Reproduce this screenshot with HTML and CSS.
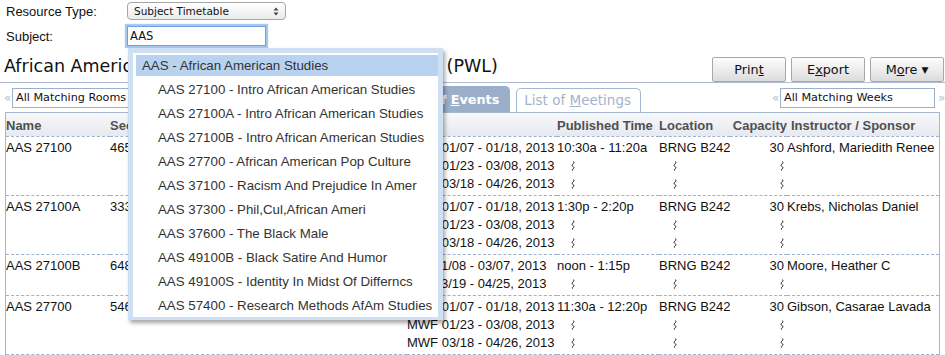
FILE: index.html
```html
<!DOCTYPE html>
<html lang="en">

<head>
  <meta charset="UTF-8">
  <title>Subject Timetable</title>
  <link rel="stylesheet" href="styles.css">
</head>

<body>
  <svg width="0" height="0" class="defs">
    <symbol id="ditto" viewBox="0 0 4 10">
      <path d="M2 0.5C3.4 1.4 3.4 2.1 2 3C0.6 3.9 0.6 4.6 2 5.5C3.4 6.4 3.4 7.1 2 8C0.8 8.8 1 9.2 2 9.6" />
    </symbol>
  </svg>

  <div class="page">
    <div class="search">
      <div class="field">
        <label>Resource Type:</label>
        <div class="select-type">Subject Timetable
          <svg class="updown" width="6" height="9" viewBox="0 0 6 9">
            <path d="M3 0.5L5.5 3.5H0.5Z M3 8.5L5.5 5.5H0.5Z" />
          </svg>
        </div>
      </div>
      <div class="field field-subject">
        <label>Subject:</label>
        <div class="input-subject">AAS</div>
      </div>
    </div>

    <div class="title-bar">
      <h1>African American Studies Timetable - Spring 2013 (PWL)</h1>
      <div class="buttons">
        <a class="btn" href="javascript:void(0)">Prin<u>t</u></a>
        <a class="btn" href="javascript:void(0)">E<u>x</u>port</a>
        <a class="btn" href="javascript:void(0)">M<u>o</u>re <span class="caret">▼</span></a>
      </div>
    </div>

    <div class="toolbar">
      <div class="pager">
        <span class="arrow">«</span>
        <div class="pager-box pager-rooms">All Matching Rooms</div>
      </div>
      <div class="spacer"></div>
      <div class="tabs">
        <a class="tab tab-active" href="javascript:void(0)">List of <u>E</u>vents</a>
        <a class="tab" href="javascript:void(0)">List of <u>M</u>eetings</a>
      </div>
      <div class="pager">
        <span class="arrow">«</span>
        <div class="pager-box pager-weeks">All Matching Weeks</div>
        <span class="arrow arrow-next">»</span>
      </div>
    </div>

    <div class="grid-box">
      <table class="grid">
        <colgroup>
          <col style="width:104px">
          <col style="width:60px">
          <col style="width:60px">
          <col style="width:177px">
          <col style="width:150px">
          <col style="width:102px">
          <col style="width:71px">
          <col style="width:57px">
          <col style="width:152px">
        </colgroup>
        <thead>
          <tr>
            <th>Name</th>
            <th>Section</th>
            <th>Type</th>
            <th>Title</th>
            <th>Date</th>
            <th>Published Time</th>
            <th>Location</th>
            <th class="cap">Capacity</th>
            <th class="instr">Instructor / Sponsor</th>
          </tr>
        </thead>
        <tbody>
          <tr>
            <td>AAS 27100</td>
            <td>46587</td>
            <td>Lec</td>
            <td>Intro African Amer Stds</td>
            <td>
              <div>MWF 01/07 - 01/18, 2013</div>
              <div>MWF 01/23 - 03/08, 2013</div>
              <div>MWF 03/18 - 04/26, 2013</div>
            </td>
            <td>
              <div>10:30a - 11:20a</div>
              <div class="same"><svg class="ditto"><use href="#ditto" /></svg></div>
              <div class="same"><svg class="ditto"><use href="#ditto" /></svg></div>
            </td>
            <td>
              <div>BRNG B242</div>
              <div class="same"><svg class="ditto"><use href="#ditto" /></svg></div>
              <div class="same"><svg class="ditto"><use href="#ditto" /></svg></div>
            </td>
            <td class="cap">
              <div>30</div>
              <div><svg class="ditto"><use href="#ditto" /></svg></div>
              <div><svg class="ditto"><use href="#ditto" /></svg></div>
            </td>
            <td>Ashford, Mariedith Renee</td>
          </tr>
          <tr>
            <td>AAS 27100A</td>
            <td>33317</td>
            <td>Lec</td>
            <td>Intro African Amer Stds</td>
            <td>
              <div>MWF 01/07 - 01/18, 2013</div>
              <div>MWF 01/23 - 03/08, 2013</div>
              <div>MWF 03/18 - 04/26, 2013</div>
            </td>
            <td>
              <div>1:30p - 2:20p</div>
              <div class="same"><svg class="ditto"><use href="#ditto" /></svg></div>
              <div class="same"><svg class="ditto"><use href="#ditto" /></svg></div>
            </td>
            <td>
              <div>BRNG B242</div>
              <div class="same"><svg class="ditto"><use href="#ditto" /></svg></div>
              <div class="same"><svg class="ditto"><use href="#ditto" /></svg></div>
            </td>
            <td class="cap">
              <div>30</div>
              <div><svg class="ditto"><use href="#ditto" /></svg></div>
              <div><svg class="ditto"><use href="#ditto" /></svg></div>
            </td>
            <td>Krebs, Nicholas Daniel</td>
          </tr>
          <tr>
            <td>AAS 27100B</td>
            <td>64857</td>
            <td>Lec</td>
            <td>Intro African Amer Stds</td>
            <td>
              <div>MW 01/08 - 03/07, 2013</div>
              <div>MW 03/19 - 04/25, 2013</div>
            </td>
            <td>
              <div>noon - 1:15p</div>
              <div class="same"><svg class="ditto"><use href="#ditto" /></svg></div>
            </td>
            <td>
              <div>BRNG B242</div>
              <div class="same"><svg class="ditto"><use href="#ditto" /></svg></div>
            </td>
            <td class="cap">
              <div>30</div>
              <div><svg class="ditto"><use href="#ditto" /></svg></div>
            </td>
            <td>Moore, Heather C</td>
          </tr>
          <tr>
            <td>AAS 27700</td>
            <td>54686</td>
            <td>Lec</td>
            <td>African Amer Pop Culture</td>
            <td>
              <div>MWF 01/07 - 01/18, 2013</div>
              <div>MWF 01/23 - 03/08, 2013</div>
              <div>MWF 03/18 - 04/26, 2013</div>
            </td>
            <td>
              <div>11:30a - 12:20p</div>
              <div class="same"><svg class="ditto"><use href="#ditto" /></svg></div>
              <div class="same"><svg class="ditto"><use href="#ditto" /></svg></div>
            </td>
            <td>
              <div>BRNG B242</div>
              <div class="same"><svg class="ditto"><use href="#ditto" /></svg></div>
              <div class="same"><svg class="ditto"><use href="#ditto" /></svg></div>
            </td>
            <td class="cap">
              <div>30</div>
              <div><svg class="ditto"><use href="#ditto" /></svg></div>
              <div><svg class="ditto"><use href="#ditto" /></svg></div>
            </td>
            <td>Gibson, Casarae Lavada</td>
          </tr>
        </tbody>
      </table>
    </div>

    <ul class="suggest">
      <li class="hl">AAS - African American Studies</li>
      <li>AAS 27100 - Intro African American Studies</li>
      <li>AAS 27100A - Intro African American Studies</li>
      <li>AAS 27100B - Intro African American Studies</li>
      <li>AAS 27700 - African American Pop Culture</li>
      <li>AAS 37100 - Racism And Prejudice In Amer</li>
      <li>AAS 37300 - Phil,Cul,African Ameri</li>
      <li>AAS 37600 - The Black Male</li>
      <li>AAS 49100B - Black Satire And Humor</li>
      <li>AAS 49100S - Identity In Midst Of Differncs</li>
      <li>AAS 57400 - Research Methods AfAm Studies</li>
    </ul>
  </div>
</body>

</html>
```

FILE: styles.css
```css
html,
body,
h1,
ul,
li {
  margin: 0;
  padding: 0;
}

html,
body {
  overflow: hidden;
  background: #fff;
}

body {
  font: 13px "Liberation Sans", Arial, sans-serif;
  color: #111;
}

a {
  color: inherit;
  text-decoration: none;
}

.defs {
  position: absolute;
}

.page {
  position: relative;
}

/* search form */
.search {
  padding: 2px 0 0 6px;
}

.field {
  display: flex;
  align-items: center;
}

.field label {
  width: 121px;
}

.field-subject {
  margin-top: 6px;
}

.select-type {
  display: flex;
  justify-content: space-between;
  align-items: center;
  box-sizing: border-box;
  width: 159px;
  height: 18px;
  padding: 0 6px 0 6px;
  border: 1px solid #a6a6a6;
  border-radius: 4px;
  background: linear-gradient(#fff, #ebebeb);
  font: 10.5px/16px "DejaVu Sans", sans-serif;
}

.updown {
  fill: #444;
}

.input-subject {
  box-sizing: border-box;
  width: 139px;
  height: 20px;
  padding-left: 2px;
  border: 1px solid #6f9fdc;
  box-shadow: 0 0 1px 2px #a8c8ee;
  font: 11.5px/18px "DejaVu Sans", sans-serif;
}

/* heading and buttons */
.title-bar {
  display: flex;
  justify-content: space-between;
  height: 25px;
  margin-top: 11px;
  border-bottom: 1px solid #aebbd0;
}

.title-bar h1 {
  padding-left: 4px;
  font: normal 17.5px/19px "DejaVu Sans", sans-serif;
  white-space: nowrap;
}

.buttons {
  display: flex;
  gap: 5px;
  padding-right: 1px;
}

.btn {
  box-sizing: border-box;
  width: 74px;
  height: 25px;
  border: 1px solid #a9a9a9;
  border-radius: 2px;
  background: linear-gradient(#fdfdfd, #dcdcdc);
  font: 12.8px/23px "DejaVu Sans", sans-serif;
  text-align: center;
}

.caret {
  font-size: 9px;
  vertical-align: 1px;
}

/* pagers and tabs */
.toolbar {
  display: flex;
  align-items: flex-start;
  height: 29px;
  padding: 0 0 0 4px;
}

.pager {
  display: flex;
  flex-shrink: 0;
  align-items: center;
  margin-top: 5px;
}

.arrow {
  flex-shrink: 0;
  width: 8px;
  color: #b8bfca;
  font: 12px/18px "DejaVu Sans", sans-serif;
}

.arrow-next {
  width: 7px;
  margin-left: 3px;
}

.pager-box {
  flex-shrink: 0;
  box-sizing: border-box;
  height: 20px;
  padding-left: 3px;
  border: 1px solid #9db0cb;
  font: 11.2px/18px "DejaVu Sans", sans-serif;
  white-space: nowrap;
}

.pager-rooms {
  width: 160px;
}

.pager-weeks {
  width: 155px;
}

.spacer {
  flex: 1;
}

.tabs {
  display: flex;
  align-items: flex-end;
  gap: 6px;
  align-self: flex-end;
  margin-right: 131px;
}

.tab {
  box-sizing: border-box;
  height: 24px;
  padding: 0 9px 0 7px;
  border: 1px solid #a5b8d3;
  border-bottom: 0;
  border-radius: 5px 5px 0 0;
  color: #a3b3cb;
  font: 13.5px/23px "DejaVu Sans", sans-serif;
  white-space: nowrap;
}

.tab-active {
  height: 26px;
  padding: 0 10px 0 9px;
  border-color: #9cafca;
  background: #9cafca;
  color: #fff;
  font-weight: bold;
  font-size: 12.8px;
  line-height: 26px;
}

/* results table */
.grid-box {
  box-sizing: border-box;
  width: 935px;
  margin-left: 5px;
  border: 1px solid #a6b6ce;
  border-bottom: 0;
}

.grid {
  width: 100%;
  table-layout: fixed;
  border-collapse: collapse;
}

.grid th {
  padding: 3px 0 0;
  border-bottom: 1px dashed #9fb1cb;
  background: linear-gradient(#f7f8fa, #e6e9ef);
  color: #505050;
  font-weight: bold;
  line-height: 20px;
  text-align: left;
  white-space: nowrap;
  overflow: hidden;
}

.grid td {
  padding: 2px 0;
  border-bottom: 1px dashed #9fb1cb;
  line-height: 18px;
  vertical-align: top;
  white-space: nowrap;
  overflow: hidden;
}

.grid th.cap {
  text-align: right;
}

.grid td.cap {
  padding-right: 3px;
  text-align: right;
}

.grid th.instr {
  padding-left: 4px;
}

.grid td div {
  height: 18px;
}

.same {
  padding-left: 14px;
}

.ditto {
  width: 4px;
  height: 10px;
  vertical-align: -1px;
  fill: none;
  stroke: #2e2b20;
  stroke-width: 1;
}

/* autocomplete list */
.suggest {
  position: absolute;
  top: 48px;
  left: 128px;
  box-sizing: border-box;
  width: 315px;
  padding: 2px 0 1px 3px;
  border: 5px solid #cfe0f4;
  border-bottom-width: 3px;
  background: #fff;
  box-shadow: 2px 3px 4px rgba(0, 0, 0, 0.35);
  list-style: none;
  color: #333;
  font-size: 13.3px;
}

.suggest li {
  height: 21px;
  padding-left: 22px;
  line-height: 21px;
  white-space: nowrap;
}

.suggest li+li {
  margin-top: 3px;
}

.suggest li.hl {
  padding-left: 6px;
  background: #b9d2ef;
}
```
